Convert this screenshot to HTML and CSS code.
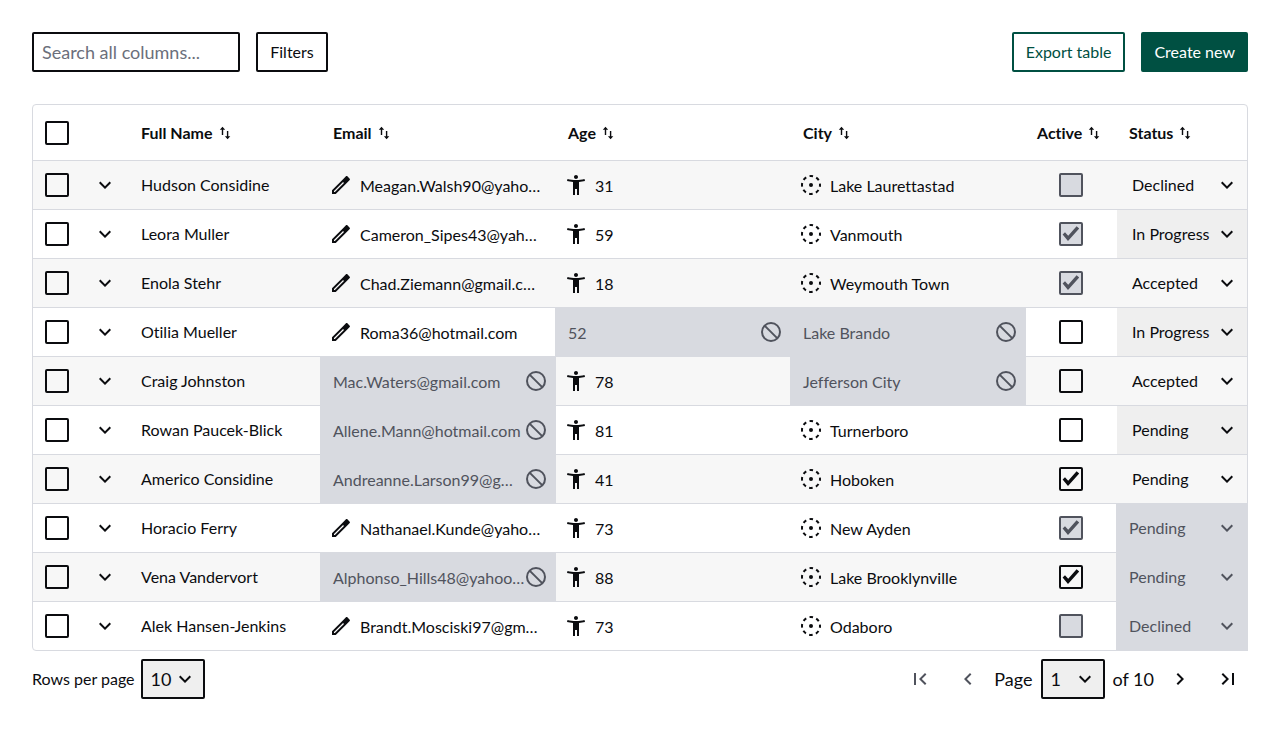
FILE: index.html
```html
<!DOCTYPE html>
<html lang="en">
<head>
<meta charset="utf-8">
<meta name="viewport" content="width=device-width, initial-scale=1">
<title>People</title>
<link rel="stylesheet" href="styles.css">
</head>
<body>
<svg class="sprite" aria-hidden="true">
  <symbol id="down" viewBox="0 0 24 24"><path d="M16.59 8.59 12 13.17 7.41 8.59 6 10l6 6 6-6z"/></symbol>
  <symbol id="sort" viewBox="0 0 16 16"><path d="M5.5 1.8 2.8 4.7h2V10h1.4V4.7h2zM10.6 14.2l2.7-2.9h-2V6H9.9v5.3h-2z"/></symbol>
  <symbol id="edit" viewBox="0 0 24 24"><path d="m14.06 9.02.92.92L5.92 19H5v-.92l9.06-9.06M17.66 3c-.25 0-.51.1-.7.29l-2.9 2.9L3 17.25V21h3.75L17.81 9.94l2.9-2.9c.39-.39.39-1.02 0-1.41l-2.34-2.34c-.2-.2-.45-.29-.71-.29z"/></symbol>
  <symbol id="person" viewBox="0 0 24 24"><path d="M20.5 6c-2.61.7-5.67 1-8.5 1s-5.89-.3-8.5-1L3 8c1.86.5 4 .83 6 1v13h2v-6h2v6h2V9c2-.17 4.14-.5 6-1zM12 6c1.1 0 2-.9 2-2s-.9-2-2-2-2 .9-2 2 .9 2 2 2z"/></symbol>
  <symbol id="place" viewBox="0 0 24 24"><circle cx="12" cy="12" r="9" fill="none" stroke="currentColor" stroke-width="2" stroke-dasharray="3.6 3.469" stroke-dashoffset="1.8"/><circle cx="12" cy="12" r="2"/></symbol>
  <symbol id="ban" viewBox="0 0 24 24"><g fill="none" stroke="currentColor" stroke-width="2"><circle cx="12" cy="12" r="9"/><path d="m5.6 5.6 12.8 12.8"/></g></symbol>
  <symbol id="first" viewBox="0 0 24 24"><path d="M18.41 16.59 13.82 12l4.59-4.59L17 6l-6 6 6 6zM6 6h2v12H6z"/></symbol>
  <symbol id="prev" viewBox="0 0 24 24"><path d="M15.41 7.41 14 6l-6 6 6 6 1.41-1.41L10.83 12z"/></symbol>
  <symbol id="next" viewBox="0 0 24 24"><path d="M10 6 8.59 7.41 13.17 12l-4.58 4.59L10 18l6-6z"/></symbol>
  <symbol id="last" viewBox="0 0 24 24"><path d="M5.59 7.41 10.18 12l-4.59 4.59L7 18l6-6-6-6zM16 6h2v12h-2z"/></symbol>
</svg>
<main class="page">
  <div class="toolbar">
    <input class="search" type="search" placeholder="Search all columns..." aria-label="Search all columns">
    <button class="btn" type="button">Filters</button>
    <div class="actions">
      <button class="btn btn-outline" type="button">Export table</button>
      <button class="btn btn-primary" type="button">Create new</button>
    </div>
  </div>

  <div class="table-frame">
    <table class="grid">
      <colgroup><col class="c-icon"><col class="c-icon"><col class="c-name"><col><col><col><col class="c-active"><col class="c-status"></colgroup>
      <thead>
        <tr>
          <th><input class="check" type="checkbox" aria-label="Select all rows"></th>
          <th></th>
          <th><button class="sort" type="button">Full Name<svg><use href="#sort"/></svg></button></th>
          <th><button class="sort" type="button">Email<svg><use href="#sort"/></svg></button></th>
          <th><button class="sort" type="button">Age<svg><use href="#sort"/></svg></button></th>
          <th><button class="sort" type="button">City<svg><use href="#sort"/></svg></button></th>
          <th class="th-active"><button class="sort" type="button">Active<svg><use href="#sort"/></svg></button></th>
          <th><button class="sort" type="button">Status<svg><use href="#sort"/></svg></button></th>
        </tr>
      </thead>
      <tbody>
        <tr>
          <td><input class="check" type="checkbox" aria-label="Select Hudson Considine"></td>
          <td class="flush"><button class="icon-btn" type="button" aria-label="Expand row"><svg class="icon"><use href="#down"/></svg></button></td>
          <td>Hudson Considine</td>
          <td class="flush"><div class="cell"><svg class="icon"><use href="#edit"/></svg><span>Meagan.Walsh90@yaho…</span></div></td>
          <td class="flush"><div class="cell"><svg class="icon"><use href="#person"/></svg><span>31</span></div></td>
          <td class="flush"><div class="cell"><svg class="icon"><use href="#place"/></svg><span>Lake Laurettastad</span></div></td>
          <td class="center"><input class="check" type="checkbox" aria-label="Active" disabled></td>
          <td class="flush"><select class="status" aria-label="Status"><option>Declined</option></select></td>
        </tr>
        <tr>
          <td><input class="check" type="checkbox" aria-label="Select Leora Muller"></td>
          <td class="flush"><button class="icon-btn" type="button" aria-label="Expand row"><svg class="icon"><use href="#down"/></svg></button></td>
          <td>Leora Muller</td>
          <td class="flush"><div class="cell"><svg class="icon"><use href="#edit"/></svg><span>Cameron_Sipes43@yah…</span></div></td>
          <td class="flush"><div class="cell"><svg class="icon"><use href="#person"/></svg><span>59</span></div></td>
          <td class="flush"><div class="cell"><svg class="icon"><use href="#place"/></svg><span>Vanmouth</span></div></td>
          <td class="center"><input class="check" type="checkbox" aria-label="Active" checked disabled></td>
          <td class="flush"><select class="status" aria-label="Status"><option>In Progress</option></select></td>
        </tr>
        <tr>
          <td><input class="check" type="checkbox" aria-label="Select Enola Stehr"></td>
          <td class="flush"><button class="icon-btn" type="button" aria-label="Expand row"><svg class="icon"><use href="#down"/></svg></button></td>
          <td>Enola Stehr</td>
          <td class="flush"><div class="cell"><svg class="icon"><use href="#edit"/></svg><span>Chad.Ziemann@gmail.c…</span></div></td>
          <td class="flush"><div class="cell"><svg class="icon"><use href="#person"/></svg><span>18</span></div></td>
          <td class="flush"><div class="cell"><svg class="icon"><use href="#place"/></svg><span>Weymouth Town</span></div></td>
          <td class="center"><input class="check" type="checkbox" aria-label="Active" checked disabled></td>
          <td class="flush"><select class="status" aria-label="Status"><option>Accepted</option></select></td>
        </tr>
        <tr>
          <td><input class="check" type="checkbox" aria-label="Select Otilia Mueller"></td>
          <td class="flush"><button class="icon-btn" type="button" aria-label="Expand row"><svg class="icon"><use href="#down"/></svg></button></td>
          <td>Otilia Mueller</td>
          <td class="flush"><div class="cell"><svg class="icon"><use href="#edit"/></svg><span>Roma36@hotmail.com</span></div></td>
          <td class="flush locked"><div class="cell"><span>52</span><svg class="icon"><use href="#ban"/></svg></div></td>
          <td class="flush locked"><div class="cell"><span>Lake Brando</span><svg class="icon"><use href="#ban"/></svg></div></td>
          <td class="center"><input class="check" type="checkbox" aria-label="Active"></td>
          <td class="flush"><select class="status" aria-label="Status"><option>In Progress</option></select></td>
        </tr>
        <tr>
          <td><input class="check" type="checkbox" aria-label="Select Craig Johnston"></td>
          <td class="flush"><button class="icon-btn" type="button" aria-label="Expand row"><svg class="icon"><use href="#down"/></svg></button></td>
          <td>Craig Johnston</td>
          <td class="flush locked"><div class="cell"><span>Mac.Waters@gmail.com</span><svg class="icon"><use href="#ban"/></svg></div></td>
          <td class="flush"><div class="cell"><svg class="icon"><use href="#person"/></svg><span>78</span></div></td>
          <td class="flush locked"><div class="cell"><span>Jefferson City</span><svg class="icon"><use href="#ban"/></svg></div></td>
          <td class="center"><input class="check" type="checkbox" aria-label="Active"></td>
          <td class="flush"><select class="status" aria-label="Status"><option>Accepted</option></select></td>
        </tr>
        <tr>
          <td><input class="check" type="checkbox" aria-label="Select Rowan Paucek-Blick"></td>
          <td class="flush"><button class="icon-btn" type="button" aria-label="Expand row"><svg class="icon"><use href="#down"/></svg></button></td>
          <td>Rowan Paucek-Blick</td>
          <td class="flush locked"><div class="cell"><span>Allene.Mann@hotmail.com</span><svg class="icon"><use href="#ban"/></svg></div></td>
          <td class="flush"><div class="cell"><svg class="icon"><use href="#person"/></svg><span>81</span></div></td>
          <td class="flush"><div class="cell"><svg class="icon"><use href="#place"/></svg><span>Turnerboro</span></div></td>
          <td class="center"><input class="check" type="checkbox" aria-label="Active"></td>
          <td class="flush"><select class="status" aria-label="Status"><option>Pending</option></select></td>
        </tr>
        <tr>
          <td><input class="check" type="checkbox" aria-label="Select Americo Considine"></td>
          <td class="flush"><button class="icon-btn" type="button" aria-label="Expand row"><svg class="icon"><use href="#down"/></svg></button></td>
          <td>Americo Considine</td>
          <td class="flush locked"><div class="cell"><span>Andreanne.Larson99@g…</span><svg class="icon"><use href="#ban"/></svg></div></td>
          <td class="flush"><div class="cell"><svg class="icon"><use href="#person"/></svg><span>41</span></div></td>
          <td class="flush"><div class="cell"><svg class="icon"><use href="#place"/></svg><span>Hoboken</span></div></td>
          <td class="center"><input class="check" type="checkbox" aria-label="Active" checked></td>
          <td class="flush"><select class="status" aria-label="Status"><option>Pending</option></select></td>
        </tr>
        <tr>
          <td><input class="check" type="checkbox" aria-label="Select Horacio Ferry"></td>
          <td class="flush"><button class="icon-btn" type="button" aria-label="Expand row"><svg class="icon"><use href="#down"/></svg></button></td>
          <td>Horacio Ferry</td>
          <td class="flush"><div class="cell"><svg class="icon"><use href="#edit"/></svg><span>Nathanael.Kunde@yaho…</span></div></td>
          <td class="flush"><div class="cell"><svg class="icon"><use href="#person"/></svg><span>73</span></div></td>
          <td class="flush"><div class="cell"><svg class="icon"><use href="#place"/></svg><span>New Ayden</span></div></td>
          <td class="center"><input class="check" type="checkbox" aria-label="Active" checked disabled></td>
          <td class="flush locked edge"><select class="status" aria-label="Status" disabled><option>Pending</option></select></td>
        </tr>
        <tr>
          <td><input class="check" type="checkbox" aria-label="Select Vena Vandervort"></td>
          <td class="flush"><button class="icon-btn" type="button" aria-label="Expand row"><svg class="icon"><use href="#down"/></svg></button></td>
          <td>Vena Vandervort</td>
          <td class="flush locked"><div class="cell"><span>Alphonso_Hills48@yahoo…</span><svg class="icon"><use href="#ban"/></svg></div></td>
          <td class="flush"><div class="cell"><svg class="icon"><use href="#person"/></svg><span>88</span></div></td>
          <td class="flush"><div class="cell"><svg class="icon"><use href="#place"/></svg><span>Lake Brooklynville</span></div></td>
          <td class="center"><input class="check" type="checkbox" aria-label="Active" checked></td>
          <td class="flush locked edge"><select class="status" aria-label="Status" disabled><option>Pending</option></select></td>
        </tr>
        <tr>
          <td><input class="check" type="checkbox" aria-label="Select Alek Hansen-Jenkins"></td>
          <td class="flush"><button class="icon-btn" type="button" aria-label="Expand row"><svg class="icon"><use href="#down"/></svg></button></td>
          <td>Alek Hansen-Jenkins</td>
          <td class="flush"><div class="cell"><svg class="icon"><use href="#edit"/></svg><span>Brandt.Mosciski97@gm…</span></div></td>
          <td class="flush"><div class="cell"><svg class="icon"><use href="#person"/></svg><span>73</span></div></td>
          <td class="flush"><div class="cell"><svg class="icon"><use href="#place"/></svg><span>Odaboro</span></div></td>
          <td class="center"><input class="check" type="checkbox" aria-label="Active" disabled></td>
          <td class="flush locked edge"><select class="status" aria-label="Status" disabled><option>Declined</option></select></td>
        </tr>
      </tbody>
    </table>
  </div>

  <div class="footer">
    <label for="rows">Rows per page</label>
    <select class="picker" id="rows"><option>10</option></select>
    <nav class="pager" aria-label="Pagination">
      <button class="page-btn" type="button" aria-label="First page" disabled><svg class="icon"><use href="#first"/></svg></button>
      <button class="page-btn" type="button" aria-label="Previous page" disabled><svg class="icon"><use href="#prev"/></svg></button>
      <div class="page-pick">
        <label for="page">Page</label>
        <select class="picker" id="page"><option>1</option></select>
        <span>of 10</span>
      </div>
      <button class="page-btn" type="button" aria-label="Next page"><svg class="icon"><use href="#next"/></svg></button>
      <button class="page-btn" type="button" aria-label="Last page"><svg class="icon"><use href="#last"/></svg></button>
    </nav>
  </div>
</main>
</body>
</html>
```
FILE: styles.css
```css
:root {
  --ink: #0b0c0f;
  --muted: #50535d;
  --line: #d8dae0;
  --stripe: #f7f7f7;
  --field: #efefef;
  --brand: #005042;
  --chevron: url("data:image/svg+xml,%3Csvg xmlns='http://www.w3.org/2000/svg' viewBox='0 0 24 24'%3E%3Cpath fill='%230b0c0f' d='M16.59 8.59 12 13.17 7.41 8.59 6 10l6 6 6-6z'/%3E%3C/svg%3E");
  --chevron-muted: url("data:image/svg+xml,%3Csvg xmlns='http://www.w3.org/2000/svg' viewBox='0 0 24 24'%3E%3Cpath fill='%2350535d' d='M16.59 8.59 12 13.17 7.41 8.59 6 10l6 6 6-6z'/%3E%3C/svg%3E");
}

* { box-sizing: border-box; }

body {
  margin: 0;
  background: #fff;
  color: var(--ink);
  font: 16px/24px Lato, "Liberation Sans", sans-serif;
  font-variant-ligatures: none;
}

button, input, select { font: inherit; font-variant-ligatures: none; color: inherit; margin: 0; }
button { cursor: pointer; }
.sprite { display: none; }
.page { padding: 32px; }

.icon {
  display: block;
  flex: none;
  width: 24px;
  height: 24px;
  fill: currentColor;
}

/* Toolbar */
.toolbar { display: flex; gap: 16px; margin-bottom: 32px; }
.actions { display: flex; gap: 16px; margin-left: auto; }

.search {
  appearance: none;
  width: 208px;
  height: 40px;
  padding: 0 8px;
  border: 2px solid var(--ink);
  border-radius: 2px;
  background: #fff;
  font-size: 18px;
}
.search::placeholder { color: #6b6f7b; opacity: 1; }

.btn {
  min-width: 72px;
  height: 40px;
  padding: 0 12px;
  border: 2px solid var(--ink);
  border-radius: 2px;
  background: #fff;
}
.btn-outline { border-color: var(--brand); color: var(--brand); }
.btn-primary { padding: 0 11px; border-color: var(--brand); background: var(--brand); color: #fff; }

/* Table */
.table-frame { border: 1px solid var(--line); border-radius: 4px; }

.grid {
  width: 100%;
  table-layout: fixed;
  border-collapse: separate;
  border-spacing: 0;
}
.c-icon { width: 48px; }
.c-name { width: 192px; }
.c-active { width: 91px; }
.c-status { width: 130px; }

th, td {
  padding: 0 12px;
  border-bottom: 1px solid var(--line);
  text-align: left;
  vertical-align: middle;
}
th { height: 56px; font-weight: 700; }
td { height: 49px; }
tbody tr:last-child td { height: 48px; border-bottom: 0; }
tbody tr:nth-child(odd) { background: var(--stripe); }
td.flush { padding: 0; }
td.center { padding-right: 13px; }
.center .check { margin: 0 auto; }
th.th-active { padding: 0 8px 0 11px; }

.sort {
  display: flex;
  align-items: center;
  gap: 4px;
  padding: 0;
  border: 0;
  background: none;
  font-weight: 700;
}
.sort svg { width: 16px; height: 16px; fill: currentColor; }

.icon-btn {
  display: flex;
  align-items: center;
  justify-content: center;
  width: 100%;
  height: 48px;
  padding: 0;
  border: 0;
  background: none;
}

.cell {
  display: flex;
  align-items: center;
  gap: 7px;
  padding: 0 12px 0 8px;
}
.cell span {
  flex: 1;
  min-width: 0;
  padding-top: 2px;
  white-space: nowrap;
}

.locked {
  background: var(--line);
  box-shadow: -1px 0 0 var(--line);
  color: var(--muted);
}
.locked .cell { gap: 0; padding: 0 8px 0 12px; }
.edge { box-shadow: -1px 0 0 var(--line), 1px 0 0 var(--line); }
tr:last-child .edge { box-shadow: 0 0 0 1px var(--line); }

.check {
  appearance: none;
  display: block;
  width: 24px;
  height: 24px;
  border: 2px solid var(--ink);
  border-radius: 2px;
}
.check:checked::before {
  content: "";
  display: block;
  width: 20px;
  height: 20px;
  background: var(--ink);
  clip-path: polygon(8% 52%, 20% 41%, 36% 59%, 78% 11%, 91% 23%, 35% 85%);
}
.check:disabled { border-color: var(--muted); background: var(--line); }
.check:disabled:checked::before { background: var(--muted); }

.status {
  appearance: none;
  display: block;
  width: 100%;
  height: 48px;
  padding: 0 32px 0 15px;
  border: 0;
  border-radius: 0;
  background: var(--field) var(--chevron) right 8px center / 24px no-repeat;
}
tr:nth-child(odd) .status { background-color: var(--stripe); }
tbody tr .status:disabled {
  padding-left: 12px;
  background-color: var(--line);
  background-image: var(--chevron-muted);
  color: var(--muted);
  opacity: 1;
}

/* Footer */
.footer { display: flex; align-items: center; gap: 6px; padding-top: 8px; }
.pager { display: flex; align-items: center; gap: 8px; margin-left: auto; font-size: 18px; }
.page-pick { display: flex; align-items: center; gap: 8px; margin: 0 -2px; }

.picker {
  appearance: none;
  width: 64px;
  height: 40px;
  padding: 0 24px 0 8px;
  border: 2px solid var(--ink);
  border-radius: 2px;
  background: var(--field) var(--chevron) right 6px center / 24px no-repeat;
  font-size: 18px;
}

.page-btn {
  display: flex;
  align-items: center;
  justify-content: center;
  width: 40px;
  height: 40px;
  padding: 0;
  border: 0;
  background: none;
}
.page-btn:disabled { color: var(--muted); cursor: default; }
```
